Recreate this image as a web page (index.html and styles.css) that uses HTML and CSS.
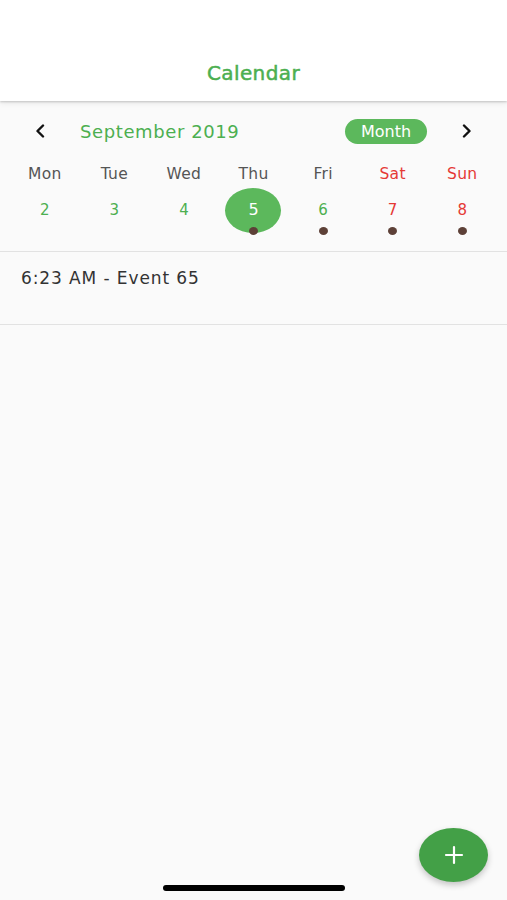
FILE: index.html
```html
<!DOCTYPE html>
<html>
<head>
<meta charset="utf-8">
<link rel="stylesheet" href="styles.css">
</head>
<body>
<div class="app">
  <header class="appbar"><h1 class="title">Calendar</h1></header>
  <section class="calendar">
    <div class="nav">
      <svg class="chev" width="10" height="14" viewBox="0 0 10 14"><path d="M8 1.5 L2.5 7 L8 12.5" fill="none" stroke="#111" stroke-width="2.4" stroke-linecap="round" stroke-linejoin="round"/></svg>
      <div class="month-title">September 2019</div>
      <div class="spacer"></div>
      <div class="pill">Month</div>
      <svg class="chev chev-right" width="10" height="14" viewBox="0 0 10 14"><path d="M2 1.5 L7.5 7 L2 12.5" fill="none" stroke="#111" stroke-width="2.4" stroke-linecap="round" stroke-linejoin="round"/></svg>
    </div>
    <div class="week names">
      <div class="cell">Mon</div>
      <div class="cell">Tue</div>
      <div class="cell">Wed</div>
      <div class="cell">Thu</div>
      <div class="cell">Fri</div>
      <div class="cell weekend">Sat</div>
      <div class="cell weekend">Sun</div>
    </div>
    <div class="week dates">
      <div class="day"><span class="num">2</span></div>
      <div class="day"><span class="num">3</span></div>
      <div class="day"><span class="num">4</span></div>
      <div class="day selected"><span class="num">5</span><span class="dot"></span></div>
      <div class="day"><span class="num">6</span><span class="dot"></span></div>
      <div class="day weekend"><span class="num">7</span><span class="dot"></span></div>
      <div class="day weekend"><span class="num">8</span><span class="dot"></span></div>
    </div>
  </section>
  <ul class="events">
    <li class="event">6:23 AM - Event 65</li>
  </ul>
  <button class="fab" aria-label="Add">
    <svg width="20" height="20" viewBox="0 0 20 20"><path d="M10 2 V18 M2 10 H18" stroke="#fff" stroke-width="2.2" stroke-linecap="round"/></svg>
  </button>
  <div class="home-indicator"></div>
</div>
</body>
</html>
```
FILE: styles.css
```css
* { box-sizing: border-box; }
html, body { margin: 0; padding: 0; }
body {
  width: 507px;
  height: 900px;
  background: #fafafa;
  font-family: "DejaVu Sans", "Liberation Sans", sans-serif;
  overflow: hidden;
}
.app {
  position: relative;
  width: 507px;
  height: 900px;
}
.appbar {
  height: 101px;
  background: #ffffff;
  display: flex;
  align-items: flex-end;
  justify-content: center;
  padding-bottom: 16px;
  box-shadow: 0 1px 2px rgba(0,0,0,0.18), 0 2px 6px rgba(0,0,0,0.08);
  position: relative;
  z-index: 1;
}
.title {
  margin: 0;
  font-size: 20px;
  font-weight: normal;
  -webkit-text-stroke: 0.5px #4caf50;
  color: #4caf50;
  letter-spacing: 0.4px;
  line-height: 24px;
}
.calendar {
  padding-top: 12px;
  border-bottom: 1px solid #e2e2e2;
  padding-bottom: 18px;
}
.nav {
  height: 36px;
  display: flex;
  align-items: center;
  padding: 0 35px 0 35px;
}
.chev { display: block; flex: none; }
.month-title {
  margin-left: 35px;
  font-size: 18px;
  color: #4caf50;
  letter-spacing: 0.6px;
}
.spacer { flex: 1; }
.pill {
  width: 82px;
  height: 25px;
  border-radius: 13px;
  background: #5cb85c;
  color: #fff;
  font-size: 16px;
  display: flex;
  align-items: center;
  justify-content: center;
  margin-right: 35px;
}
.week {
  display: grid;
  grid-template-columns: repeat(7, 1fr);
  padding: 0 10px;
}
.names { margin-top: 15px; height: 20px; }
.cell {
  text-align: center;
  font-size: 15.5px;
  color: #555;
  line-height: 20px;
  letter-spacing: 0.3px;
}
.weekend.cell, .day.weekend .num { color: #e53935; }
.dates { margin-top: 4px; height: 45px; }
.day {
  position: relative;
  display: flex;
  justify-content: center;
  align-items: center;
}
.num {
  font-size: 15px;
  color: #4caf50;
  line-height: 20px;
  margin-top: -2px;
}
.day.selected::before {
  content: "";
  position: absolute;
  left: 50%;
  top: 0;
  width: 56px;
  height: 45px;
  margin-left: -28px;
  border-radius: 50%;
  background: #5cb85c;
}
.day.selected .num { color: #fff; position: relative; font-size: 16px; }
.dot {
  position: absolute;
  left: 50%;
  bottom: -2px;
  width: 9px;
  height: 8px;
  margin-left: -4.5px;
  border-radius: 50%;
  background: #5d4037;
}
.events {
  list-style: none;
  margin: 0;
  padding: 0;
}
.event {
  height: 73px;
  padding: 15px 21px 0;
  font-size: 17px;
  color: #333;
  letter-spacing: 0.9px;
  line-height: 22px;
  border-bottom: 1px solid #e2e2e2;
}
.fab {
  position: absolute;
  left: 419px;
  top: 828px;
  width: 69px;
  height: 54px;
  border-radius: 50%;
  border: none;
  background: #43a047;
  display: flex;
  align-items: center;
  justify-content: center;
  box-shadow: 0 3px 6px rgba(0,0,0,0.22);
  padding: 0;
}
.fab svg { display: block; }
.home-indicator {
  position: absolute;
  left: 163px;
  top: 885px;
  width: 182px;
  height: 6px;
  border-radius: 3px;
  background: #000;
}
```
